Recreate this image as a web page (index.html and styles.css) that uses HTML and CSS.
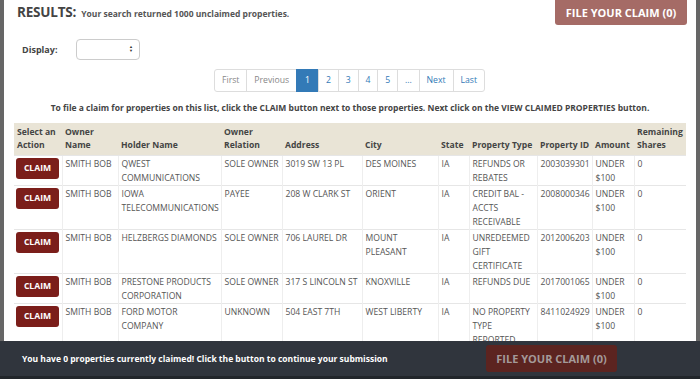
FILE: index.html
```html
<!DOCTYPE html>
<html lang="en">

<head>
  <meta charset="UTF-8" />
  <title>Search Results</title>
  <link rel="stylesheet" href="styles.css">
</head>

<body>
  <div class="page">
    <!-- results header -->
    <div class="top">
      <h1><span>RESULTS:</span> <small>Your search returned 1000 unclaimed properties.</small></h1>
      <a class="btn-file" href="#">FILE YOUR CLAIM (0)</a>
    </div>

    <div class="display">
      <label>Display:</label>
      <div class="select"><span class="arrows">&#9650;<br>&#9660;</span></div>
    </div>

    <ul class="pager">
      <li class="off">First</li>
      <li class="off">Previous</li>
      <li class="on">1</li>
      <li>2</li>
      <li>3</li>
      <li>4</li>
      <li>5</li>
      <li>...</li>
      <li>Next</li>
      <li>Last</li>
    </ul>

    <p class="help">To file a claim for properties on this list, click the CLAIM button next to those properties. Next click on the VIEW CLAIMED PROPERTIES button.</p>

    <table class="results">
      <colgroup>
        <col style="width:48px"><col style="width:56px"><col style="width:103px"><col style="width:61px">
        <col style="width:80px"><col style="width:76px"><col style="width:31px"><col style="width:68px">
        <col style="width:55px"><col style="width:42px"><col style="width:52px">
      </colgroup>
      <thead>
        <tr>
          <th>Select an Action</th>
          <th>Owner Name</th>
          <th>Holder Name</th>
          <th>Owner Relation</th>
          <th>Address</th>
          <th>City</th>
          <th>State</th>
          <th>Property Type</th>
          <th>Property ID</th>
          <th>Amount</th>
          <th>Remaining Shares</th>
        </tr>
      </thead>
      <tbody>
        <tr>
          <td><span class="claim">CLAIM</span></td>
          <td>SMITH BOB</td>
          <td>QWEST COMMUNICATIONS</td>
          <td class="rel">SOLE OWNER</td>
          <td>3019 SW 13 PL</td>
          <td>DES MOINES</td>
          <td>IA</td>
          <td>REFUNDS OR REBATES</td>
          <td>2003039301</td>
          <td>UNDER $100</td>
          <td>0</td>
        </tr>
        <tr>
          <td><span class="claim">CLAIM</span></td>
          <td>SMITH BOB</td>
          <td>IOWA TELECOMMUNICATIONS</td>
          <td class="rel">PAYEE</td>
          <td>208 W CLARK ST</td>
          <td>ORIENT</td>
          <td>IA</td>
          <td>CREDIT BAL - ACCTS RECEIVABLE</td>
          <td>2008000346</td>
          <td>UNDER $100</td>
          <td>0</td>
        </tr>
        <tr>
          <td><span class="claim">CLAIM</span></td>
          <td>SMITH BOB</td>
          <td>HELZBERGS DIAMONDS</td>
          <td class="rel">SOLE OWNER</td>
          <td>706 LAUREL DR</td>
          <td>MOUNT PLEASANT</td>
          <td>IA</td>
          <td>UNREDEEMED GIFT CERTIFICATE</td>
          <td>2012006203</td>
          <td>UNDER $100</td>
          <td>0</td>
        </tr>
        <tr>
          <td><span class="claim">CLAIM</span></td>
          <td>SMITH BOB</td>
          <td>PRESTONE PRODUCTS CORPORATION</td>
          <td class="rel">SOLE OWNER</td>
          <td>317 S LINCOLN ST</td>
          <td>KNOXVILLE</td>
          <td>IA</td>
          <td>REFUNDS DUE</td>
          <td>2017001065</td>
          <td>UNDER $100</td>
          <td>0</td>
        </tr>
        <tr>
          <td><span class="claim">CLAIM</span></td>
          <td>SMITH BOB</td>
          <td>FORD MOTOR COMPANY</td>
          <td class="rel">UNKNOWN</td>
          <td>504 EAST 7TH</td>
          <td>WEST LIBERTY</td>
          <td>IA</td>
          <td>NO PROPERTY TYPE REPORTED</td>
          <td>8411024929</td>
          <td>UNDER $100</td>
          <td>0</td>
        </tr>
      </tbody>
    </table>
  </div>

  <!-- sticky bar at the bottom -->
  <div class="claimbar">
    <p>You have 0 properties currently claimed! Click the button to continue your submission</p>
    <span class="btn-bar">FILE YOUR CLAIM (0)</span>
  </div>
</body>

</html>
```

FILE: styles.css
```css
body {
    margin: 0;
    padding: 0;
    background-color: #666;
    font-family: "Open Sans", "Liberation Sans", sans-serif;
    color: #555;
  }

  .page {
    margin: 0 4px;
    height: 379px;
    padding: 0 10px;
    background-color: #fff;
    overflow: hidden;
    box-sizing: border-box;
  }

  .top {
    display: flex;
    justify-content: space-between;
    align-items: flex-start;
    height: 39px;
  }

  .top h1 {
    display: flex;
    align-items: baseline;
    gap: 5px;
    margin: 3px 0 0 3px;
    font-size: 13.5px;
    letter-spacing: -0.2px;
    font-weight: 700;
    color: #444;
  }

  .top h1 small {
    font-size: 8.5px;
    letter-spacing: 0;
    font-weight: 700;
    color: #555;
  }

  .btn-file {
    display: block;
    width: 132px;
    height: 25px;
    margin-right: -1px;
    line-height: 25px;
    text-align: center;
    color: #fff;
    font-size: 11px;
    font-weight: 700;
    text-decoration: none;
    background-color: #a56b66;
    border-radius: 0 0 3px 3px;
  }

  .display {
    display: flex;
    align-items: center;
    margin-left: 8px;
  }

  .display label {
    width: 54px;
    font-size: 9px;
    font-weight: 700;
    color: #444;
  }

  .select {
    width: 62px;
    height: 19px;
    border: 1px solid #ccc;
    border-radius: 4px;
    position: relative;
  }

  .select .arrows {
    position: absolute;
    right: 6px;
    top: 5px;
    font-size: 4px;
    line-height: 4px;
    color: #333;
  }

  .pager {
    display: flex;
    justify-content: center;
    list-style: none;
    margin: 9px 0 0;
    padding: 0;
  }

  .pager li {
    height: 21px;
    line-height: 21px;
    padding: 0 6.9px;
    font-size: 8.7px;
    color: #337ab7;
    border: 1px solid #ddd;
    margin-left: -1px;
  }

  .pager li:first-child {
    border-radius: 3px 0 0 3px;
  }

  .pager li:last-child {
    border-radius: 0 3px 3px 0;
  }

  .pager .off {
    color: #888;
  }

  .pager .on {
    color: #fff;
    background-color: #337ab7;
    border-color: #337ab7;
    padding: 0 8px;
  }

  .help {
    margin: 10px 0 10px;
    text-align: center;
    font-size: 8.5px;
    font-weight: 700;
    color: #444;
  }

  .results {
    width: 672px;
    border-collapse: collapse;
    table-layout: fixed;
    font-size: 8.6px;
    line-height: 14px;
  }

  .results th {
    padding: 3px 2px 3px 3px;
    line-height: 13px;
    text-align: left;
    vertical-align: bottom;
    font-weight: 700;
    color: #444;
    background-color: #e9e4d6;
  }

  .results td {
    padding: 1px 2px 0 3px;
    vertical-align: top;
    border-top: 1px solid #e6e6e6;
    border-left: 1px solid #eee;
  }

  .results td.rel {
    padding-right: 0;
  }

  .results td:first-child {
    padding: 2px 2px 1px 2px;
    border-left: none;
  }

  .claim {
    display: block;
    width: 43px;
    height: 21px;
    line-height: 21px;
    text-align: center;
    color: #fff;
    font-size: 8.6px;
    font-weight: 700;
    background-color: #7b1e1a;
    border-radius: 3px;
  }

  .claimbar {
    position: fixed;
    left: 0;
    right: 0;
    bottom: 0;
    height: 35px;
    padding: 0 22px;
    display: flex;
    align-items: center;
    justify-content: space-between;
    background-color: #30353d;
    border-bottom: 3px solid #22262b;
  }

  .claimbar p {
    margin: 0;
    color: #fff;
    font-size: 8.5px;
    font-weight: 700;
  }

  .btn-bar {
    width: 131px;
    height: 27px;
    margin-right: 61px;
    line-height: 27px;
    text-align: center;
    font-size: 11px;
    font-weight: 700;
    color: #a49a99;
    background-color: #5c2420;
    border-radius: 3px;
  }
```
